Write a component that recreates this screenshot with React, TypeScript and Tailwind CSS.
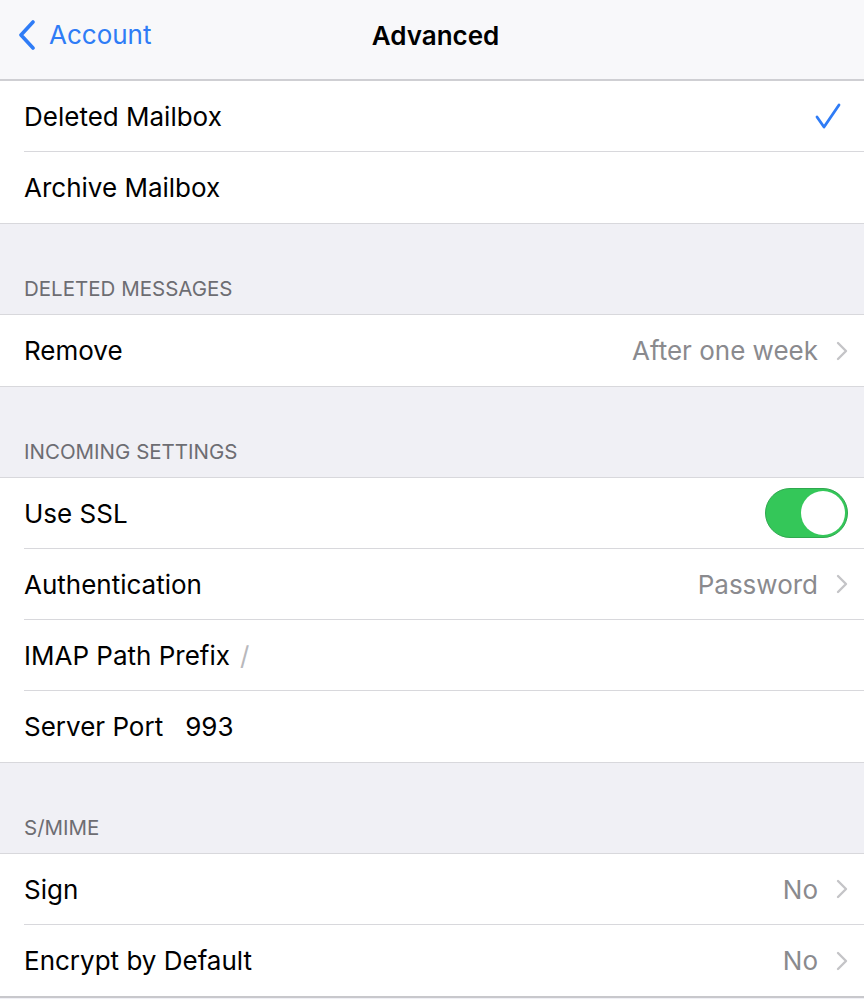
import React from "react";

const Chevron = () => (
  <svg width="12" height="20" viewBox="0 0 12 20" className="ml-[18px] shrink-0">
    <path d="M2 2 L10 10 L2 18" fill="none" stroke="#c4c4c7" strokeWidth="2.4" strokeLinecap="round" strokeLinejoin="round" />
  </svg>
);

function Row({ label, value, chevron, last, children, right }: { label: string; value?: string; chevron?: boolean; last?: boolean; children?: React.ReactNode; right?: React.ReactNode }) {
  return (
    <div className="bg-white pl-6">
      <div className={`h-[71px] flex items-center pr-4 ${last ? "" : "border-b border-[#d8d8dc]"}`}>
        <span className="text-[26px] text-black">{label}</span>
        {children}
        <div className="flex-1" />
        {value && <span className="text-[26px] text-[#8a8a8e]">{value}</span>}
        {chevron && <Chevron />}
        {right}
      </div>
    </div>
  );
}

function Header({ title }: { title: string }) {
  return (
    <div className="h-[91px] bg-[#f0f0f5] flex items-end pl-6 pb-[9px] border-b border-[#d8d8dc]">
      <span className="text-[20.5px] text-[#6d6d72] uppercase">{title}</span>
    </div>
  );
}

export default function App() {
  return (
    <div className="w-[864px] h-[999px] bg-[#f0f0f5] overflow-hidden" style={{ fontFamily: "Inter, Roboto, 'Liberation Sans', sans-serif" }}>
      <div className="h-[81px] bg-[#f8f8fa] border-b-2 border-[#cfcfd3] relative flex items-center">
        <div className="flex items-center pl-[17px] -mt-[10px]">
          <svg width="20" height="30" viewBox="0 0 20 30">
            <path d="M16 2 L4 15 L16 28" fill="none" stroke="#2f7cf6" strokeWidth="3.6" strokeLinecap="round" strokeLinejoin="round" />
          </svg>
          <span className="ml-[12px] text-[26px] text-[#2f7cf6]">Account</span>
        </div>
        <div className="absolute left-0 right-0 top-[16px] text-center pl-[7px] text-[26px] font-semibold text-black">Advanced</div>
      </div>
      <div className="bg-white">
        <Row
          label="Deleted Mailbox"
          right={
            <svg width="28" height="28" viewBox="0 0 28 28" className="mr-[6px]">
              <path d="M3 15 L10 25 L25 3" fill="none" stroke="#2f7cf6" strokeWidth="2.8" strokeLinecap="round" strokeLinejoin="round" />
            </svg>
          }
        />
        <Row label="Archive Mailbox" last />
      </div>
      <div className="border-t border-[#d8d8dc]" />
      <Header title="Deleted Messages" />
      <Row label="Remove" value="After one week" chevron last />
      <div className="border-t border-[#d8d8dc]" />
      <Header title="Incoming Settings" />
      <Row
        label="Use SSL"
        right={
          <div className="w-[83px] h-[50px] rounded-full bg-[#34c759] border border-[#2fa84f] flex items-center justify-end pr-[2px]">
            <div className="w-[44px] h-[44px] rounded-full bg-white" />
          </div>
        }
      />
      <Row label="Authentication" value="Password" chevron />
      <Row label="IMAP Path Prefix">
        <span className="ml-[10px] text-[26px] text-[#b8b8bc]">/</span>
      </Row>
      <Row label="Server Port" last>
        <span className="ml-[22px] text-[26px] text-black">993</span>
      </Row>
      <div className="border-t border-[#d8d8dc]" />
      <Header title="S/MIME" />
      <Row label="Sign" value="No" chevron />
      <Row label="Encrypt by Default" value="No" chevron last />
      <div className="border-t-2 border-[#c8c8cc]" />
    </div>
  );
}
